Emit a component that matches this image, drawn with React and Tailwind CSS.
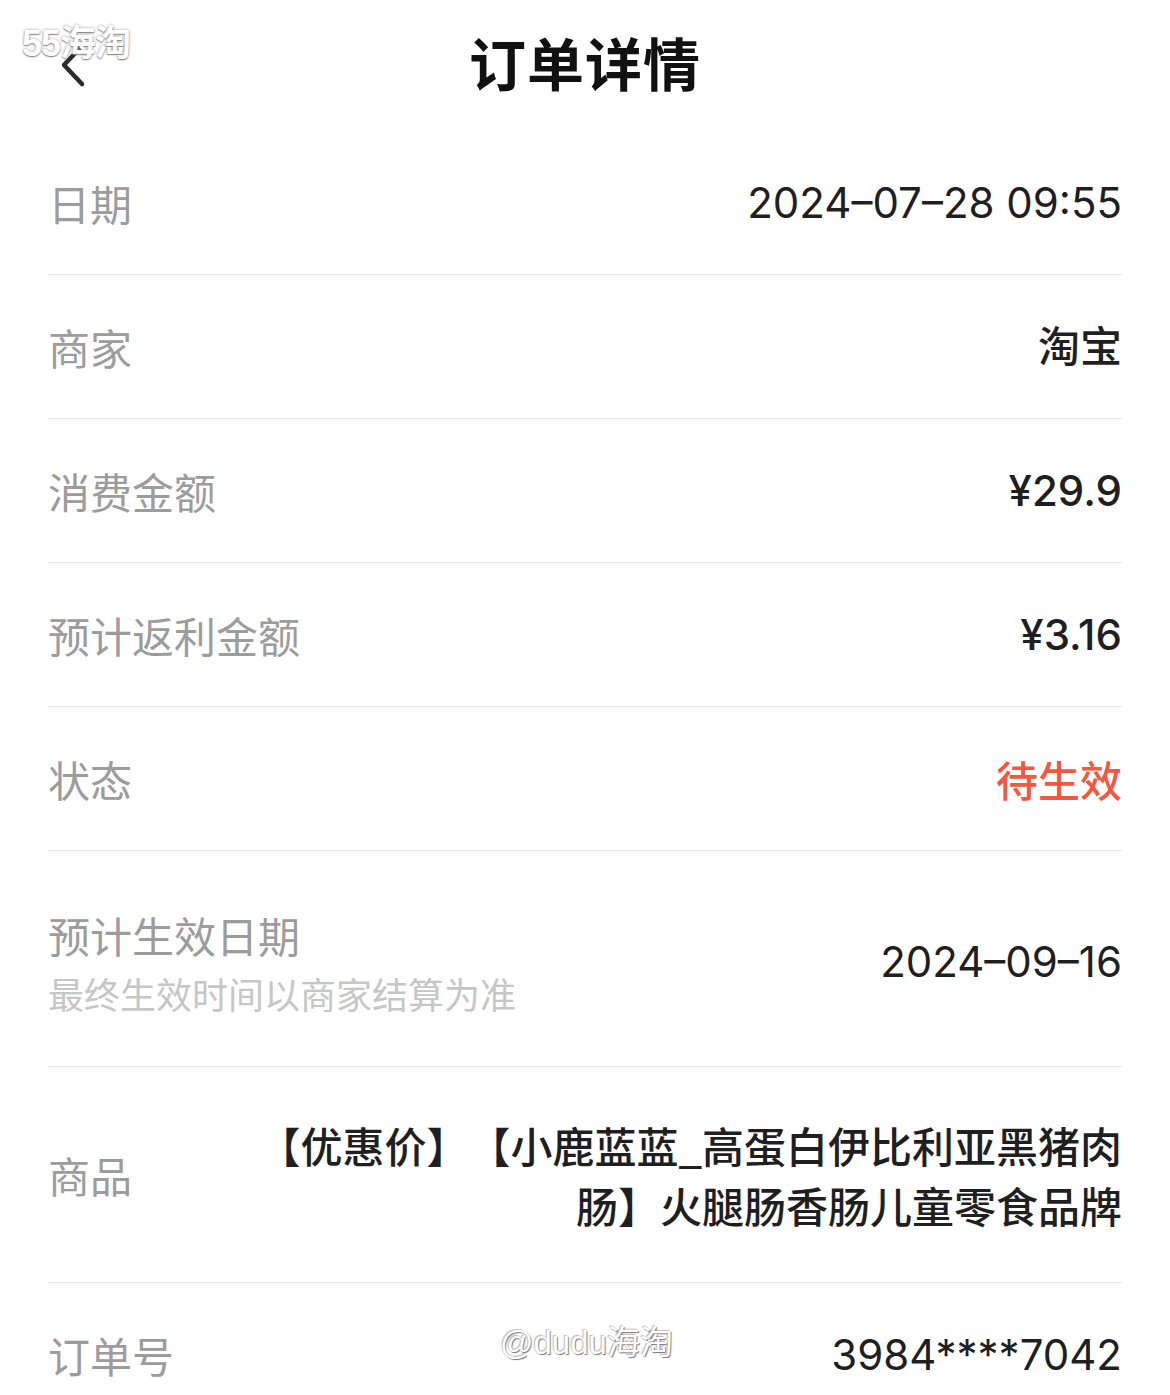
import React from "react";

function Row({ label, children, sub, tall }) {
  return (
    <div
      className={`flex items-center justify-between border-b border-[#e9e9e9] ${tall ? "h-[216px]" : "h-[144px]"}`}
    >
      <div className={`flex shrink-0 flex-col ${sub ? "pt-[10px]" : ""}`}>
        <span className="font-['Noto_Sans_CJK_SC',sans-serif] text-[42px] leading-[58px] text-[#9c9c9c]">
          {label}
        </span>
        {sub && (
          <span className="font-['Noto_Sans_CJK_SC',sans-serif] text-[36px] leading-[58px] text-[#c6c6c6]">
            {sub}
          </span>
        )}
      </div>
      {children}
    </div>
  );
}

const valCls = "font-['Inter','Noto_Sans_CJK_SC',sans-serif] text-[42px] text-[#1f1f1f]";

export default function App() {
  return (
    <div className="relative h-[1395px] w-[1170px] overflow-hidden bg-white">
      <header className="grid h-[131px] grid-cols-[1fr_auto_1fr] items-center px-[48px]">
        <div className="flex items-center">
          <svg width="40" height="50" viewBox="0 0 40 50" className="ml-[4px] -mt-[2px]">
            <polyline
              points="30,6 12,25 30,44"
              fill="none"
              stroke="#2b2b2b"
              strokeWidth="4.5"
              strokeLinecap="round"
              strokeLinejoin="round"
            />
          </svg>
        </div>
        <h1 className="-mt-[8px] font-['Noto_Sans_CJK_SC',sans-serif] text-[57px] font-bold leading-none tracking-[1px] text-[#111]">
          订单详情
        </h1>
        <div />
      </header>

      <main className="px-[48px]">
        <Row label="日期">
          <span className={valCls}>2024–07–28 09:55</span>
        </Row>
        <Row label="商家">
          <span className={`${valCls} font-medium`}>淘宝</span>
        </Row>
        <Row label="消费金额">
          <span className={`${valCls} font-medium`}>¥29.9</span>
        </Row>
        <Row label="预计返利金额">
          <span className={`${valCls} font-medium`}>¥3.16</span>
        </Row>
        <Row label="状态">
          <span className="font-['Noto_Sans_CJK_SC',sans-serif] text-[42px] font-medium text-[#f4573f]">
            待生效
          </span>
        </Row>
        <Row label="预计生效日期" sub="最终生效时间以商家结算为准" tall>
          <span className={`${valCls} mt-[6px]`}>2024–09–16</span>
        </Row>
        <Row label="商品" tall>
          <span className="w-[880px] text-right font-['Noto_Sans_CJK_SC',sans-serif] text-[42px] font-medium leading-[60px] text-[#1f1f1f] [text-spacing-trim:space-all]">
            【优惠价】【小鹿蓝蓝_高蛋白伊比利亚黑猪肉肠】火腿肠香肠儿童零食品牌
          </span>
        </Row>
        <Row label="订单号">
          <span className={valCls}>3984****7042</span>
        </Row>
      </main>

      <div className="absolute left-[22px] top-[26px] font-['Liberation_Sans','Noto_Sans_CJK_SC',sans-serif] text-[36px] font-bold leading-none tracking-[-1px] text-white [text-shadow:0_1px_1px_#888,0_0_3px_#999]">
        55海淘
      </div>
      <div className="absolute left-[500px] top-[1326px] font-['Liberation_Sans','Noto_Sans_CJK_SC',sans-serif] text-[33px] leading-none text-white [text-shadow:1px_1px_1px_#777,-1px_-1px_1px_#bbb]">
        @dudu海淘
      </div>
    </div>
  );
}
